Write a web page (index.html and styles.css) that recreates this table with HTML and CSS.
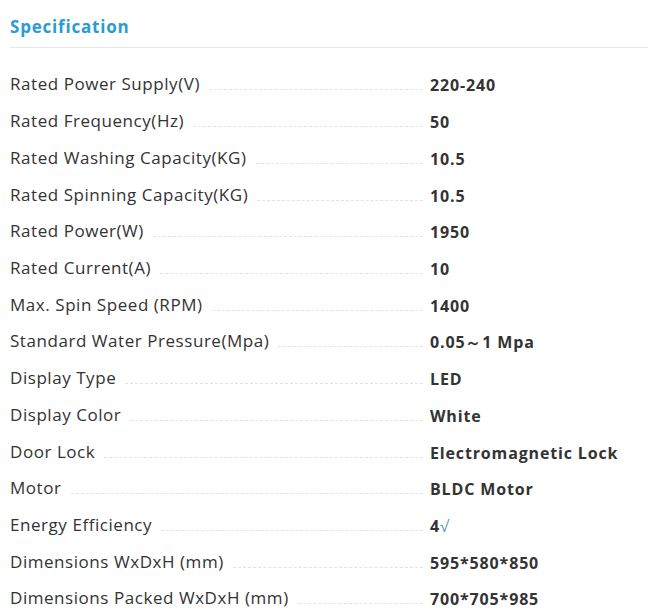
FILE: index.html
```html
<!DOCTYPE html>
<html>
<head>
<meta charset="utf-8">
<link rel="stylesheet" href="styles.css">
</head>
<body>
<div class="spec">
  <h2 class="title">Specification</h2>
  <div class="rows">
    <div class="row"><div class="name"><span class="label">Rated Power Supply(V)</span><span class="dash"></span></div><span class="value">220-240</span></div>
    <div class="row"><div class="name"><span class="label">Rated Frequency(Hz)</span><span class="dash"></span></div><span class="value">50</span></div>
    <div class="row"><div class="name"><span class="label">Rated Washing Capacity(KG)</span><span class="dash"></span></div><span class="value">10.5</span></div>
    <div class="row"><div class="name"><span class="label">Rated Spinning Capacity(KG)</span><span class="dash"></span></div><span class="value">10.5</span></div>
    <div class="row"><div class="name"><span class="label">Rated Power(W)</span><span class="dash"></span></div><span class="value">1950</span></div>
    <div class="row"><div class="name"><span class="label">Rated Current(A)</span><span class="dash"></span></div><span class="value">10</span></div>
    <div class="row"><div class="name"><span class="label">Max. Spin Speed (RPM)</span><span class="dash"></span></div><span class="value">1400</span></div>
    <div class="row"><div class="name"><span class="label">Standard Water Pressure(Mpa)</span><span class="dash"></span></div><span class="value">0.05～1 Mpa</span></div>
    <div class="row"><div class="name"><span class="label">Display Type</span><span class="dash"></span></div><span class="value">LED</span></div>
    <div class="row"><div class="name"><span class="label">Display Color</span><span class="dash"></span></div><span class="value">White</span></div>
    <div class="row"><div class="name"><span class="label">Door Lock</span><span class="dash"></span></div><span class="value">Electromagnetic Lock</span></div>
    <div class="row"><div class="name"><span class="label">Motor</span><span class="dash"></span></div><span class="value">BLDC Motor</span></div>
    <div class="row"><div class="name"><span class="label">Energy Efficiency</span><span class="dash"></span></div><span class="value">4<span class="check">√</span></span></div>
    <div class="row"><div class="name"><span class="label">Dimensions WxDxH (mm)</span><span class="dash"></span></div><span class="value">595*580*850</span></div>
    <div class="row"><div class="name"><span class="label">Dimensions Packed WxDxH (mm)</span><span class="dash"></span></div><span class="value">700*705*985</span></div>
  </div>
</div>
</body>
</html>
```
FILE: styles.css
```css
html, body {
  margin: 0;
  padding: 0;
  background: #fff;
}
body {
  font-family: "Open Sans", "DejaVu Sans", sans-serif;
  color: #333;
}
.spec {
  padding-left: 10px;
}
.title {
  margin: 0;
  height: 48px;
  box-sizing: border-box;
  padding-top: 15px;
  border-bottom: 1px solid #e6e6e6;
  font-size: 17px;
  line-height: 24px;
  font-weight: 700;
  letter-spacing: 0.8px;
  color: #2b9ad6;
}
.rows {
  padding-top: 18px;
}
.row {
  display: grid;
  grid-template-columns: 1fr 218px;
  align-items: center;
  height: 36.72px;
}
.name {
  display: flex;
  align-items: center;
  padding-right: 7px;
}
.label {
  white-space: nowrap;
  font-size: 17px;
  line-height: 22px;
  letter-spacing: 0.55px;
}
.dash {
  flex: 1;
  margin-left: 9px;
  margin-top: 11px;
  border-bottom: 1px dashed #e2e2e2;
}
.value {
  font-size: 16px;
  line-height: 22px;
  font-weight: 700;
  letter-spacing: 0.85px;
  white-space: nowrap;
  padding-top: 2px;
}
.check {
  font-weight: 400;
  letter-spacing: 0;
  color: #6a93bb;
}
```
